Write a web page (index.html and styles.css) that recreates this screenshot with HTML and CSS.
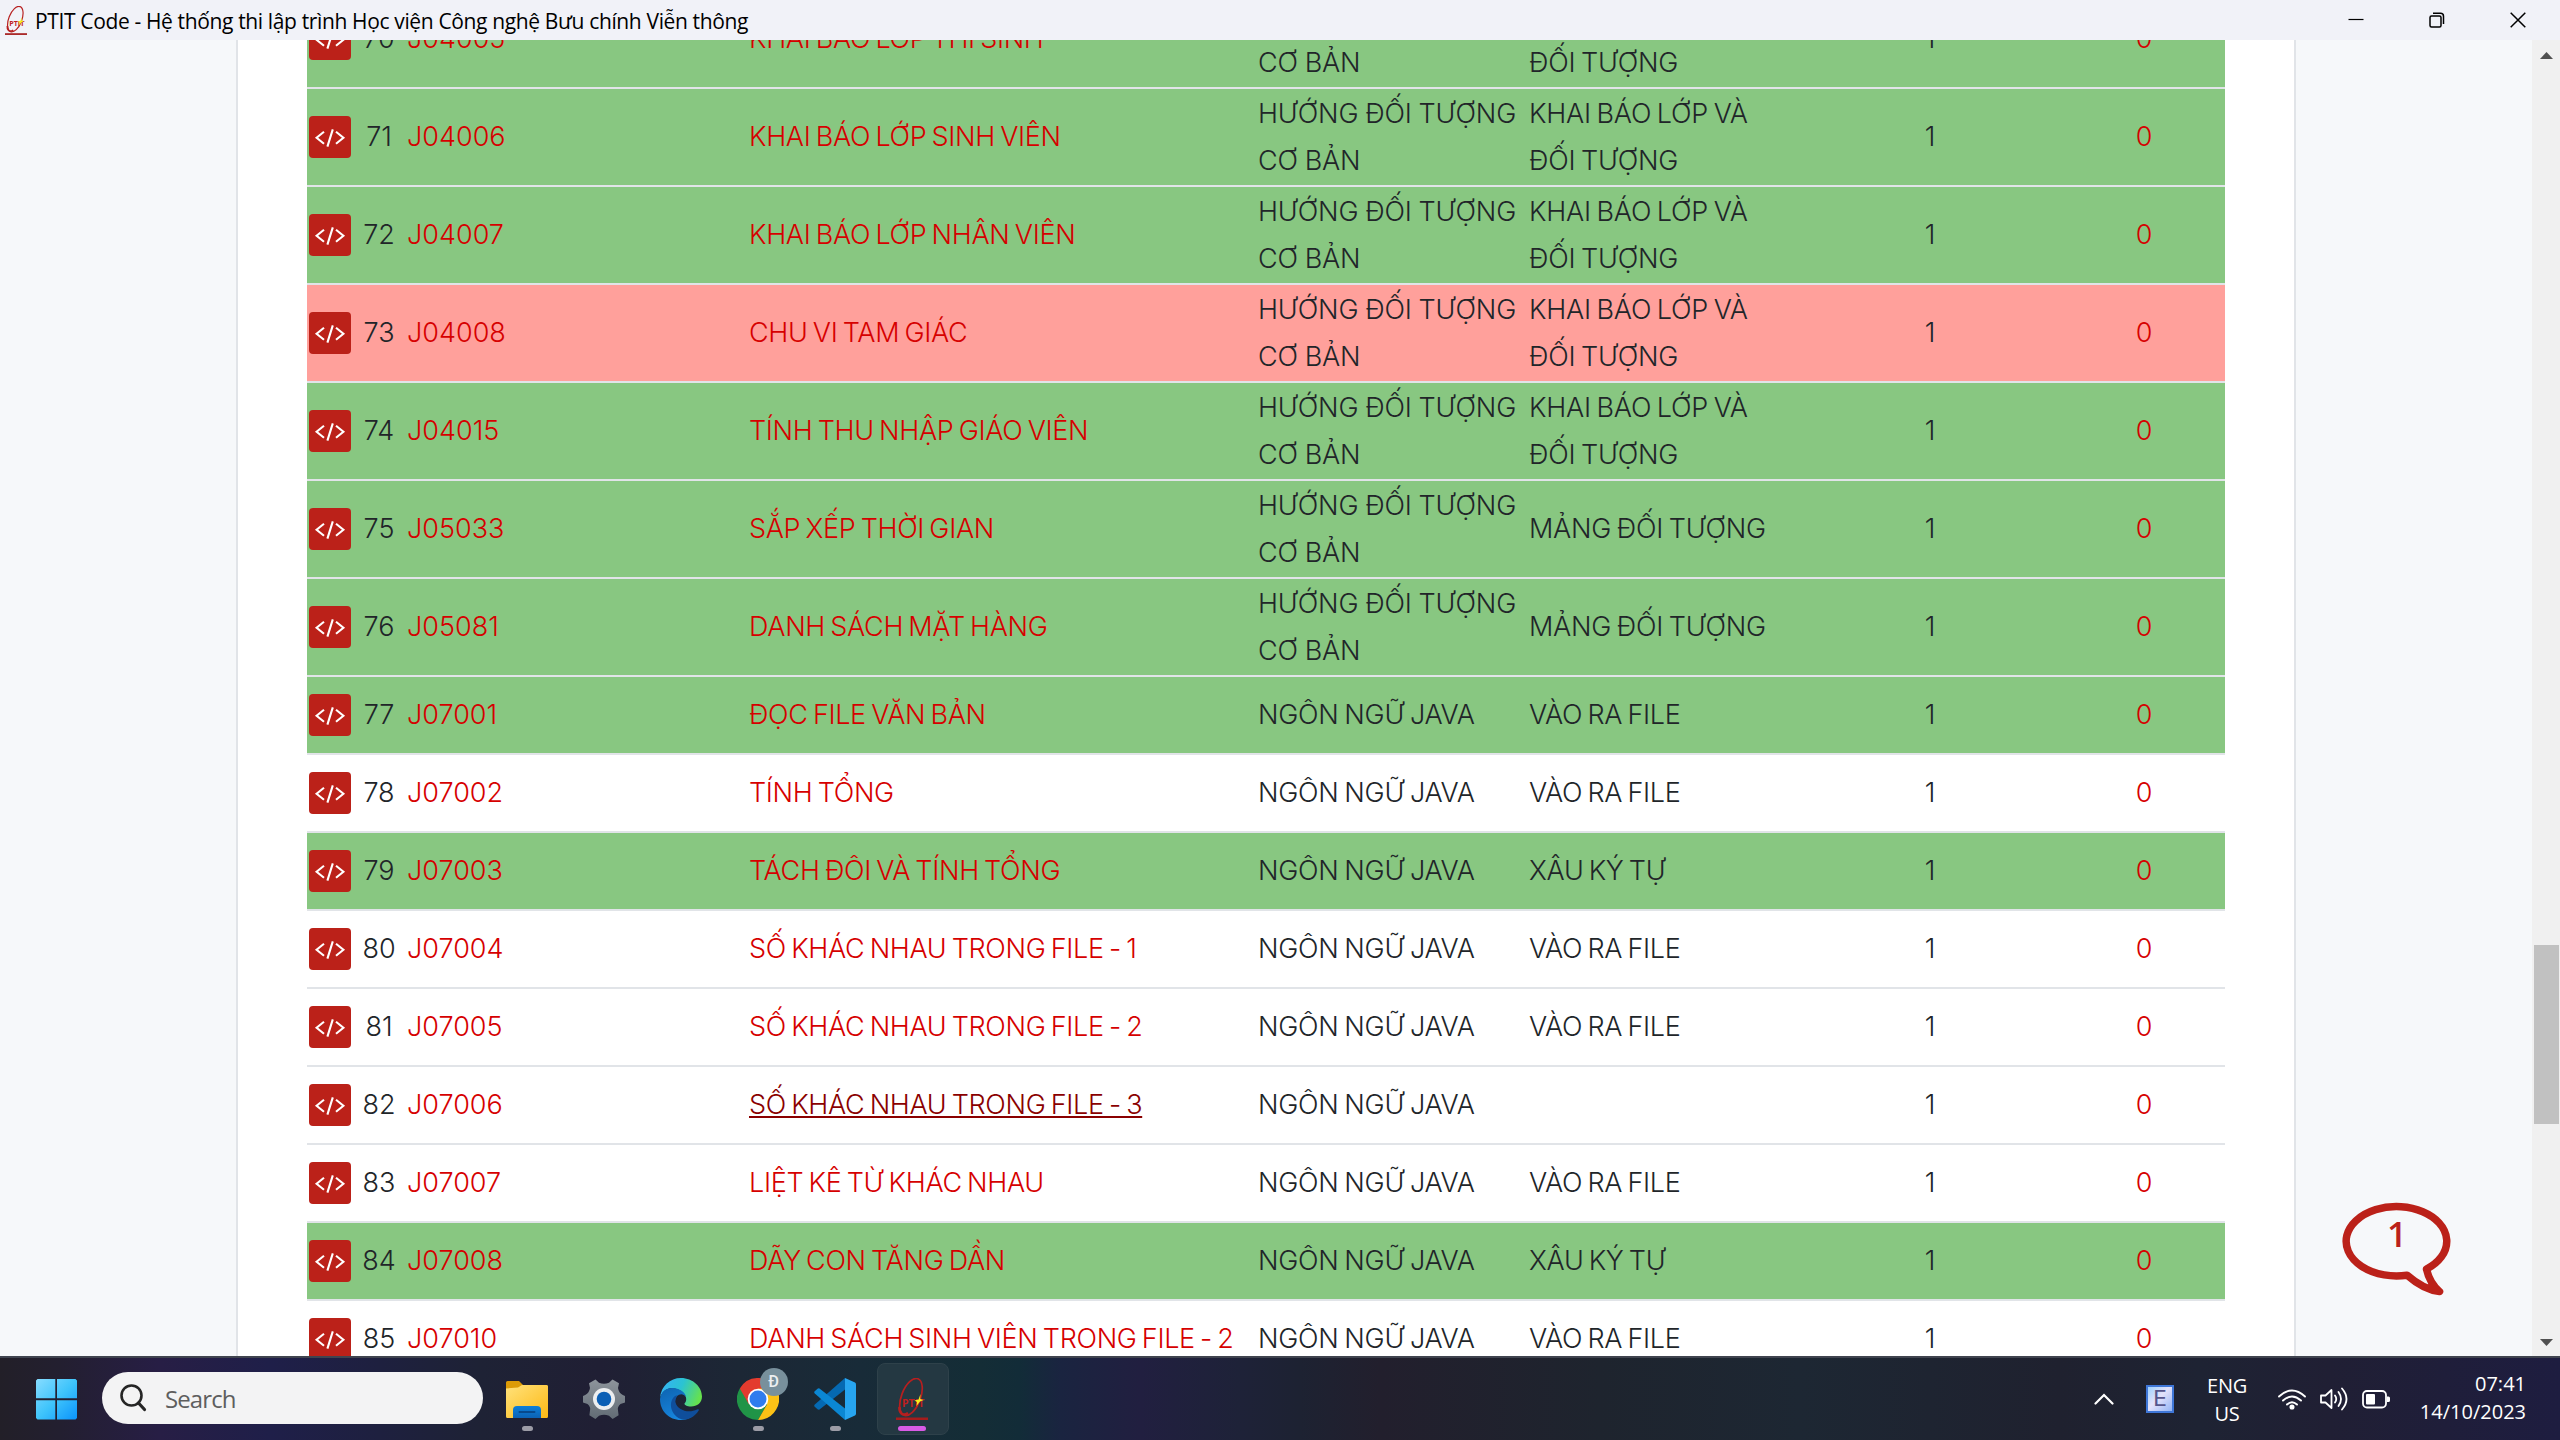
FILE: index.html
```html
<!DOCTYPE html>
<html lang="vi">
<head>
<meta charset="utf-8">
<title>PTIT Code</title>
<link rel="stylesheet" href="styles.css">
</head>
<body>
<svg class="defs" aria-hidden="true">
  <symbol id="code" viewBox="0 0 42 42"><path d="M15 15.8 7.6 21.8 15 27.8M27 15.8l7.4 6-7.4 6M23.8 13.4l-5.4 17.2" fill="none" stroke="#fff" stroke-width="2.1"/></symbol>
  <symbol id="ptit" viewBox="0 0 32 42">
    <ellipse cx="15" cy="19" rx="9.5" ry="19.5" transform="rotate(21 15 19)" fill="none" stroke="#b71f1f" stroke-width="1.7"/>
    <path d="M12 35C6 39 3 34 3.500 29" fill="none" stroke="#b71f1f" stroke-width="2.600"/>
    <text x="6" y="28.500" class="ptit-text">PTIT</text>
    <path d="M0 39.500h32v2.500H0z" fill="#a51c1c"/>
    <path d="M24.500 16l-.3 5 3.300 1-3.500 1.600-3.500 4.400.5-4-2.500-1.500 4-1z" fill="#f4ee1c"/>
  </symbol>
</svg>

<header class="titlebar">
  <svg class="favicon"><use href="#ptit"/></svg>
  <span class="window-title">PTIT Code - Hệ thống thi lập trình Học viện Công nghệ Bưu chính Viễn thông</span>
  <div class="window-buttons">
    <svg viewBox="0 0 16 16"><path d="M.5 7.500h15" stroke="#000" stroke-width="1.200"/></svg>
    <svg viewBox="0 0 16 16"><rect x="1" y="4" width="11" height="11" rx="1.500"/><path d="M4 1.200h7.500a3 3 0 0 1 3 3V12"/></svg>
    <svg viewBox="0 0 16 16"><path d="M.7.700l14.600 14.600M15.300.700.700 15.300"/></svg>
  </div>
</header>

<div class="viewport">
  <main class="page">
    <div class="problems">
      <div class="row tall done"><span class="btn"><svg><use href="#code"/></svg></span><span class="no">70</span><a>J04005</a><a class="name">KHAI BÁO LỚP THÍ SINH</a><span class="group two">HƯỚNG ĐỐI TƯỢNG CƠ BẢN</span><span class="sub two">KHAI BÁO LỚP VÀ ĐỐI TƯỢNG</span><span class="num">1</span><span class="num red">0</span></div>
      <div class="row tall done"><span class="btn"><svg><use href="#code"/></svg></span><span class="no">71</span><a>J04006</a><a class="name">KHAI BÁO LỚP SINH VIÊN</a><span class="group two">HƯỚNG ĐỐI TƯỢNG CƠ BẢN</span><span class="sub two">KHAI BÁO LỚP VÀ ĐỐI TƯỢNG</span><span class="num">1</span><span class="num red">0</span></div>
      <div class="row tall done"><span class="btn"><svg><use href="#code"/></svg></span><span class="no">72</span><a>J04007</a><a class="name">KHAI BÁO LỚP NHÂN VIÊN</a><span class="group two">HƯỚNG ĐỐI TƯỢNG CƠ BẢN</span><span class="sub two">KHAI BÁO LỚP VÀ ĐỐI TƯỢNG</span><span class="num">1</span><span class="num red">0</span></div>
      <div class="row tall failed"><span class="btn"><svg><use href="#code"/></svg></span><span class="no">73</span><a>J04008</a><a class="name">CHU VI TAM GIÁC</a><span class="group two">HƯỚNG ĐỐI TƯỢNG CƠ BẢN</span><span class="sub two">KHAI BÁO LỚP VÀ ĐỐI TƯỢNG</span><span class="num">1</span><span class="num red">0</span></div>
      <div class="row tall done"><span class="btn"><svg><use href="#code"/></svg></span><span class="no">74</span><a>J04015</a><a class="name">TÍNH THU NHẬP GIÁO VIÊN</a><span class="group two">HƯỚNG ĐỐI TƯỢNG CƠ BẢN</span><span class="sub two">KHAI BÁO LỚP VÀ ĐỐI TƯỢNG</span><span class="num">1</span><span class="num red">0</span></div>
      <div class="row tall done"><span class="btn"><svg><use href="#code"/></svg></span><span class="no">75</span><a>J05033</a><a class="name">SẮP XẾP THỜI GIAN</a><span class="group two">HƯỚNG ĐỐI TƯỢNG CƠ BẢN</span><span class="sub">MẢNG ĐỐI TƯỢNG</span><span class="num">1</span><span class="num red">0</span></div>
      <div class="row tall done"><span class="btn"><svg><use href="#code"/></svg></span><span class="no">76</span><a>J05081</a><a class="name">DANH SÁCH MẶT HÀNG</a><span class="group two">HƯỚNG ĐỐI TƯỢNG CƠ BẢN</span><span class="sub">MẢNG ĐỐI TƯỢNG</span><span class="num">1</span><span class="num red">0</span></div>
      <div class="row done"><span class="btn"><svg><use href="#code"/></svg></span><span class="no">77</span><a>J07001</a><a class="name">ĐỌC FILE VĂN BẢN</a><span class="sub">NGÔN NGỮ JAVA</span><span class="name">VÀO RA FILE</span><span class="num">1</span><span class="num red">0</span></div>
      <div class="row"><span class="btn"><svg><use href="#code"/></svg></span><span class="no">78</span><a>J07002</a><a class="name">TÍNH TỔNG</a><span class="sub">NGÔN NGỮ JAVA</span><span class="name">VÀO RA FILE</span><span class="num">1</span><span class="num red">0</span></div>
      <div class="row done"><span class="btn"><svg><use href="#code"/></svg></span><span class="no">79</span><a>J07003</a><a class="name">TÁCH ĐÔI VÀ TÍNH TỔNG</a><span class="sub">NGÔN NGỮ JAVA</span><span class="name">XÂU KÝ TỰ</span><span class="num">1</span><span class="num red">0</span></div>
      <div class="row"><span class="btn"><svg><use href="#code"/></svg></span><span class="no">80</span><a>J07004</a><a class="name">SỐ KHÁC NHAU TRONG FILE - 1</a><span class="sub">NGÔN NGỮ JAVA</span><span class="name">VÀO RA FILE</span><span class="num">1</span><span class="num red">0</span></div>
      <div class="row"><span class="btn"><svg><use href="#code"/></svg></span><span class="no">81</span><a>J07005</a><a class="name">SỐ KHÁC NHAU TRONG FILE - 2</a><span class="sub">NGÔN NGỮ JAVA</span><span class="name">VÀO RA FILE</span><span class="num">1</span><span class="num red">0</span></div>
      <div class="row"><span class="btn"><svg><use href="#code"/></svg></span><span class="no">82</span><a>J07006</a><a class="name hovered">SỐ KHÁC NHAU TRONG FILE - 3</a><span class="sub">NGÔN NGỮ JAVA</span><span></span><span class="num">1</span><span class="num red">0</span></div>
      <div class="row"><span class="btn"><svg><use href="#code"/></svg></span><span class="no">83</span><a>J07007</a><a class="name">LIỆT KÊ TỪ KHÁC NHAU</a><span class="sub">NGÔN NGỮ JAVA</span><span class="name">VÀO RA FILE</span><span class="num">1</span><span class="num red">0</span></div>
      <div class="row done"><span class="btn"><svg><use href="#code"/></svg></span><span class="no">84</span><a>J07008</a><a class="name">DÃY CON TĂNG DẦN</a><span class="sub">NGÔN NGỮ JAVA</span><span class="name">XÂU KÝ TỰ</span><span class="num">1</span><span class="num red">0</span></div>
      <div class="row"><span class="btn"><svg><use href="#code"/></svg></span><span class="no">85</span><a>J07010</a><a class="name">DANH SÁCH SINH VIÊN TRONG FILE - 2</a><span class="sub">NGÔN NGỮ JAVA</span><span class="name">VÀO RA FILE</span><span class="num">1</span><span class="num red">0</span></div>
    </div>
  </main>
  <div class="chat">
    <svg viewBox="0 0 110 94"><path d="M65 73.200A50.300 34.700 0 1 1 84.500 67.100Q87.500 81 97.500 89.500Q82 88 65 73.200Z" fill="none" stroke="#bb2119" stroke-width="7.500" stroke-linejoin="round"/></svg>
    <span>1</span>
  </div>
  <div class="scrollbar">
    <svg viewBox="0 0 13 7"><path d="M0 7 6.500 0 13 7z"/></svg>
    <div class="thumb"></div>
    <svg viewBox="0 0 13 7"><path d="M0 0h13L6.500 7z"/></svg>
  </div>
</div>

<footer class="taskbar">
  <svg class="start" viewBox="0 0 41 41">
    <defs><linearGradient id="win" gradientUnits="userSpaceOnUse" x1="0" y1="0" x2="41" y2="41"><stop offset="0" stop-color="#87dcff"/><stop offset=".5" stop-color="#3fc4fb"/><stop offset="1" stop-color="#0a93fb"/></linearGradient></defs>
    <path d="M1.500 0H19.300V19.300H0V1.500zM21 0H39.500L41 1.500V19.300H21zM0 21.200H19.300V40.500H1.500L0 39zM21 21.200H41V39L39.500 40.500H21z" fill="url(#win)"/>
  </svg>
  <div class="search">
    <svg viewBox="0 0 27 28"><circle cx="11.500" cy="11.500" r="10" fill="none" stroke="#252525" stroke-width="2.600"/><path d="M18.500 19l6 6.500" stroke="#252525" stroke-width="3.200" stroke-linecap="round"/></svg>
    <span>Search</span>
  </div>
  <div class="apps">
    <div class="app running"><svg viewBox="0 0 42 42">
      <defs><linearGradient id="fold" x1="0" y1="0" x2="1" y2="1"><stop offset="0" stop-color="#ffe27c"/><stop offset="1" stop-color="#fdb914"/></linearGradient><linearGradient id="fb" x1="0" y1="0" x2="0" y2="1"><stop offset="0" stop-color="#0d7fd8"/><stop offset="1" stop-color="#0c62b4"/></linearGradient></defs>
      <path d="M0 4.500a1.500 1.500 0 0 1 1.500-1.500H13l4 4h23a2 2 0 0 1 2 2v8H0z" fill="#dc9b06"/><path d="M0 10.500 12 9.500l4-2.500h24.500a1.500 1.500 0 0 1 1.500 1.500V38.500a1.500 1.500 0 0 1-1.500 1.500h-39A1.500 1.500 0 0 1 0 38.500z" fill="url(#fold)"/>
      <path d="M7 40V32a4 4 0 0 1 4-4h20a4 4 0 0 1 4 4v8z" fill="url(#fb)"/><path d="M13.500 34h15" stroke="#07498c" stroke-width="2" stroke-linecap="round"/></svg></div>
    <div class="app"><svg viewBox="0 0 42 42">
      <defs><linearGradient id="gear" x1="0" y1="0" x2="0" y2="1"><stop offset="0" stop-color="#8d949b"/><stop offset="1" stop-color="#626c75"/></linearGradient></defs>
      <path d="M12.500 1.500l3.500 3.200q5 2 10 0L29.500 1.500 36 5.200l-1 4.800q.7 4.800 4.800 7l2.200 1v6.500l-4.500 1.500q-3.500 3-2.500 6.500l.6 4.800-6 3.700-3.600-3.200q-5-2-10 0l-3.600 3.200-6-3.700.6-4.800q1-3.500-2.500-6.500L0 24.500V18l2.200-1q4.100-2.200 4.800-7L6 5.200z" fill="url(#gear)"/><circle cx="21" cy="21" r="11" fill="#eceef0"/><circle cx="21" cy="21" r="7.300" fill="#0b5fb5"/></svg></div>
    <div class="app"><svg viewBox="0 0 42 42">
      <defs><linearGradient id="e1" x1="0" y1=".2" x2="1" y2=".5"><stop offset="0" stop-color="#35b2f7"/><stop offset=".5" stop-color="#2bc3d2"/><stop offset="1" stop-color="#66e14e"/></linearGradient><linearGradient id="e2" x1="0" y1="0" x2=".5" y2="1"><stop offset="0" stop-color="#0e63b0"/><stop offset="1" stop-color="#1787e0"/></linearGradient></defs>
      <path d="M21 0C33 0 42 9 42 18.500 42 25 37 28.500 31 28.500 27 28.500 24 27 24.500 25.500 26 24 26.500 22 26 19.500 24 13 16 9 9 10.500 4 12 1 16 0 20 1 8 10 0 21 0z" fill="url(#e1)"/>
      <path d="M0 21C1 13 7 9.500 13 10 20 10.500 25.500 14.500 26 19 22 13.500 15 17 15 24 15 34 26 38 36 34.500 33 39 27 42 21 42 9 42 0 33 0 21z" fill="url(#e2)"/>
      <path d="M15 18C10 22 9.500 30 14 36 18 41 23 42.500 28 41 33 39.500 37 35.500 39 32 39 31 38 31 37 31.500 28 36 17 31.500 15.500 24.500 15 22 16 19 18 17z" fill="#0f4e9b"/></svg></div>
    <div class="app running"><svg viewBox="0 0 42 42">
      <path d="M21 21 2.800 10.500A21 21 0 0 1 39.200 10.500z" fill="#e33b2e"/><path d="M21 21 2.800 10.500A21 21 0 0 0 21 42L30.100 26.200z" fill="#209447"/><path d="M21 10.500H39.200A21 21 0 0 1 21 42L30.100 26.200z" fill="#fbc116"/><path d="M2.800 10.500 11.900 26.300 21 10.500z" fill="#e33b2e"/><circle cx="21" cy="21" r="10.300" fill="#fff"/><circle cx="21" cy="21" r="8.500" fill="#2f7cee"/></svg><span class="avatar">Đ</span></div>
    <div class="app running"><svg viewBox="0 0 42 42">
      <path d="M31 0v11.500L5.500 31.500Q4.500 32 3.500 31.300L.7 28.700Q-.3 27.500.8 26.500z" fill="#0569b2"/><path d="M3.500 10.700Q4.500 10 5.500 10.500L31 30.500V42L.8 15.500Q-.3 14.500.7 13.300z" fill="#0b87d3"/><path d="M31 0 41 4.500Q42 5 42 6.500V35.500Q42 37 41 37.500L31 42z" fill="#27a5f0"/></svg></div>
    <div class="app active"><svg class="ptit"><use href="#ptit"/></svg></div>
  </div>
  <div class="tray">
    <svg class="chevron" viewBox="0 0 20 12"><path d="M1.500 10.500 10 2l8.500 8.500" fill="none" stroke="#fff" stroke-width="2.200" stroke-linecap="round"/></svg>
    <span class="ime">E</span>
    <span class="lang">ENG<br>US</span>
    <svg class="status" viewBox="0 0 28 28" fill="none" stroke="#fff" stroke-width="1.900" stroke-linecap="round"><path d="M1 11.500Q14-.5 27 11.500M5 15.500q9-8 18 0M9 19.500q5-4.500 10 0"/><circle cx="14" cy="22" r="1.600" fill="#fff"/></svg>
    <svg class="status" viewBox="0 0 28 28" fill="none" stroke="#fff" stroke-width="1.800" stroke-linecap="round" stroke-linejoin="round"><path d="M1 10.500h4.500L11.500 5v18l-6-5.500H1zM15 10.500q2.500 3.500 0 7M18.500 7q5 7 0 14M22 3.500q9 10.500 0 21"/></svg>
    <svg class="status" viewBox="0 0 28 28"><rect x="1" y="6" width="23" height="16.500" rx="4" fill="none" stroke="#fff" stroke-width="1.800"/><rect x="4" y="9" width="9" height="10.500" rx="1" fill="#fff"/><path d="M25 11.500h1.500a1.500 1.500 0 0 1 1.500 1.500v2.500a1.500 1.500 0 0 1-1.500 1.500H25z" fill="#fff"/></svg>
    <span class="clock">07:41<br>14/10/2023</span>
  </div>
</footer>
</body>
</html>
```
FILE: styles.css
```css
* { box-sizing: border-box; }
body {
  margin: 0;
  width: 2560px;
  height: 1440px;
  overflow: hidden;
  display: flex;
  flex-direction: column;
  font-family: "Open Sans", "Noto Sans", sans-serif;
}
svg { display: block; flex: none; }
.defs { position: absolute; width: 0; height: 0; }
.ptit-text { font: 700 10.5px "Open Sans", sans-serif; fill: #c01f1f; }

.titlebar {
  height: 40px;
  flex: none;
  display: flex;
  align-items: center;
  padding: 0 34px 0 5px;
  background: #f1f2f8;
}
.favicon { width: 22px; height: 29px; }
.window-title { margin-left: 8px; padding-top: 2px; font-size: 21px; letter-spacing: -0.36px; color: #000; white-space: nowrap; }
.window-buttons { margin-left: auto; display: flex; gap: 65px; }
.window-buttons svg { width: 16px; height: 16px; fill: none; stroke: #000; stroke-width: 1.5; }

.viewport {
  position: relative;
  height: 1316px;
  flex: none;
  display: flex;
  overflow: hidden;
  background: #f6f8fa;
}
.page {
  width: 2060px;
  margin-left: 236px;
  padding: 0 69px;
  background: #fff;
  border: solid #e1e4e8;
  border-width: 0 2px;
}
.problems {
  margin-top: -51px;
  font-family: Inter, sans-serif;
  font-size: 27px;
  font-weight: 300;
  line-height: 47px;
  color: #212529;
}
.row {
  height: 78px;
  display: grid;
  grid-template-columns: 44px 56px 342px 509px 271px 268px 266px 1fr;
  align-items: center;
  border-top: 2px solid #e1e4e8;
}
.row > :not(.btn):not(.two) { padding-bottom: 2px; }
.tall { height: 98px; }
.done { background: #88c781; }
.failed { background: #ffa09b; }
.row a, .red { color: #d60000; }
.name { letter-spacing: -0.32px; word-spacing: -2px; white-space: nowrap; }
.sub { letter-spacing: -0.25px; word-spacing: -1.6px; }
.group { letter-spacing: -0.15px; word-spacing: -0.6px; }
.row .hovered { color: #8a0000; text-decoration: underline; text-decoration-thickness: 2px; text-underline-offset: 2px; text-decoration-skip-ink: none; justify-self: start; }
.no, .num { text-align: center; }
.btn { width: 42px; height: 42px; margin-left: 2px; border-radius: 4px; background: #bb2119; }
.btn svg { width: 42px; height: 42px; }

.chat { position: absolute; left: 2342px; top: 1162px; width: 110px; height: 94px; }
.chat svg { width: 110px; height: 94px; }
.chat span { position: absolute; left: 45px; top: 8px; font-size: 35px; font-weight: 600; line-height: 48px; color: #bb2119; }

.scrollbar {
  width: 28px;
  margin-left: auto;
  padding: 12px 0 10px;
  display: flex;
  flex-direction: column;
  align-items: center;
  background: #f0f0f0;
}
.scrollbar svg { width: 13px; height: 7px; fill: #505050; }
.thumb { width: 25px; height: 179px; margin: 886px 0 auto 1px; background: #c1c1c1; }

.taskbar {
  height: 84px;
  flex: none;
  display: flex;
  align-items: center;
  padding: 0 34px 0 36px;
  border-top: 2px solid #40444f;
  background: linear-gradient(90deg, #221f28 0, #231f30 60px, #271e45 160px, #1f1f49 270px, #1e203f 380px, #1e2235 480px, #201f34 600px, #1c2735 740px, #182b38 860px, #142d36 980px, #122c38 1020px, #1a2440 1060px, #211f40 1140px, #1e2238 1240px, #1d2232 1300px, #221f2d 1380px, #1e242e 1600px, #1d2733 1800px, #1f212f 2060px, #1e2333 2200px, #201f34 2330px, #1e1d40 2560px);
  color: #fff;
}
.start { width: 41px; height: 41px; }
.search {
  width: 381px;
  height: 52px;
  margin: 0 0 2px 25px;
  padding-left: 18px;
  display: flex;
  align-items: center;
  gap: 18px;
  border-radius: 26px;
  background: #f3f3f4;
  color: #5e5e5e;
  font-size: 24px;
  letter-spacing: -0.9px;
}
.search svg { width: 27px; height: 28px; }
.apps { display: flex; margin-left: 5.5px; }
.app { position: relative; width: 77px; height: 82px; display: flex; align-items: center; justify-content: center; }
.app svg { width: 42px; height: 42px; }
.app .ptit { width: 32px; height: 42px; position: relative; }
.running::after, .active::after {
  content: "";
  position: absolute;
  left: 33px;
  bottom: 9px;
  width: 11px;
  height: 5px;
  border-radius: 3px;
  background: #9c9ca6;
}
.active::after { left: 24px; width: 28px; background: #d95be6; }
.active::before {
  content: "";
  position: absolute;
  left: 3px;
  top: 5px;
  width: 70px;
  height: 70px;
  border-radius: 8px;
  border: 1px solid #2e414a;
  background: #243842;
}
.avatar {
  position: absolute;
  left: 40px;
  top: 10px;
  width: 28px;
  height: 28px;
  border-radius: 50%;
  background: #78909c;
  color: #eceff1;
  font: 500 16px/28px Roboto, sans-serif;
  text-align: center;
}
.tray { margin-left: auto; display: flex; align-items: center; }
.chevron { width: 20px; height: 12px; }
.ime {
  width: 28px;
  height: 28px;
  margin: 0 32px 0 32px;
  border: 2px solid #3f77d8;
  background: linear-gradient(135deg, #9ed2ff, #e4e2fa 45%, #93b4f4);
  color: #55558c;
  font: 400 22px/24px "DejaVu Sans", sans-serif;
  text-align: center;
}
.lang, .clock { font-size: 20px; line-height: 28px; }
.lang { width: 42px; padding-top: 2px; text-align: center; letter-spacing: -0.3px; }
.status { width: 28px; height: 28px; margin-left: 14px; }
.lang + .status { margin-left: 30px; }
.clock { width: 136px; padding-bottom: 2px; text-align: right; white-space: nowrap; }
```
